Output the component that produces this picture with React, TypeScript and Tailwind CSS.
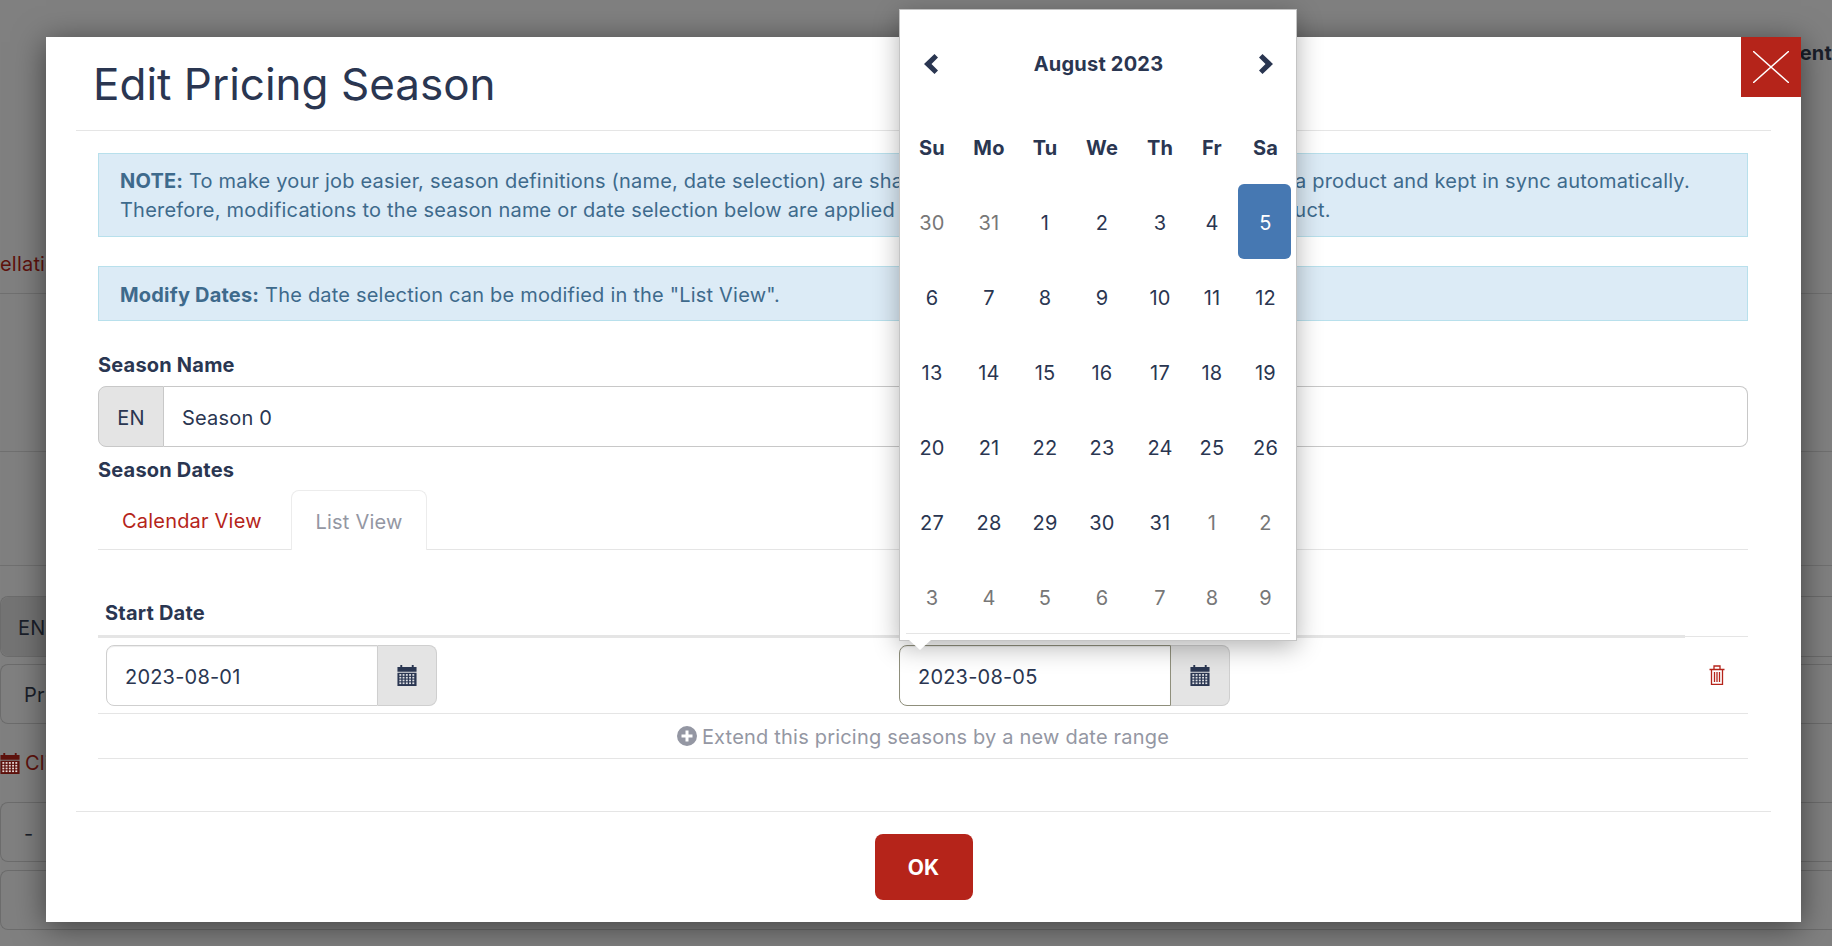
const font = '[font-family:Inter,"Noto_Sans",sans-serif]'

const weeks = [
  ['30', '31', '1', '2', '3', '4', '5'],
  ['6', '7', '8', '9', '10', '11', '12'],
  ['13', '14', '15', '16', '17', '18', '19'],
  ['20', '21', '22', '23', '24', '25', '26'],
  ['27', '28', '29', '30', '31', '1', '2'],
  ['3', '4', '5', '6', '7', '8', '9'],
]
const days = ['Su', 'Mo', 'Tu', 'We', 'Th', 'Fr', 'Sa']

function CalendarIcon({ className }: { className: string }) {
  const holes = []
  for (let r = 0; r < 4; r++) {
    for (let c = 0; c < 5; c++) {
      holes.push(<rect key={`${r}-${c}`} x={2 + c * 3.4} y={9.500 + r * 2.900} width="2" height="1.800" fill="white" opacity="0.85" />)
    }
  }
  return (
    <svg viewBox="0 0 20 22" className={className} fill="currentColor">
      <path d="M3 0h2v2h10V0h2v2h3v5H0V2h3V0zM0 8h20v14H0V8z" />
      {holes}
    </svg>
  )
}

function DateInput({ value, active }: { value: string; active?: boolean }) {
  return (
    <div className="flex h-[61px] w-[331px] text-[#2a3651]">
      <div className={`flex flex-1 items-center rounded-l-lg border bg-white pt-[2px] pl-[18px] shadow-[inset_0_1px_1px_rgba(0,0,0,0.075)] ${active ? 'border-[#8f8f7c]' : 'border-[#cfcfcf]'}`}>
        {value}
      </div>
      <div className="flex w-[59px] items-center justify-center rounded-r-lg border border-l-0 border-[#cfcfcf] bg-[#e4e4e4]">
        <CalendarIcon className="h-[21px] w-[20px]" />
      </div>
    </div>
  )
}

export default function App() {
  return (
    <div className={`${font} relative h-[946px] overflow-hidden bg-[#808080] text-[20px] tracking-[0.2px]`}>
      {/* page behind the dialog */}
      <div className="flex h-full flex-col text-[#1a1f2a]">
        <div className="flex h-[294px] flex-col border-b border-[#707070]">
          <div className="mt-[38px] self-end font-bold">ent</div>
          <div className="mt-auto mb-[14px] text-[#5e120d]">ellation</div>
        </div>
        <div className="h-[158px] border-b border-[#707070]" />
        <div className="h-[114px] border-b border-[#707070]" />
        <div className="mt-[30px] flex h-[61px] shrink-0 rounded-l-lg border border-r-0 border-[#6c6c6c]">
          <div className="flex w-[66px] items-center rounded-l-lg bg-[#747474] pt-[2px] pl-[17px]">EN</div>
        </div>
        <div className="mt-[7px] flex h-[60px] shrink-0 items-center rounded-l-lg border border-r-0 border-[#6c6c6c] pt-[2px] pl-[23px]">Price</div>
        <div className="mt-[27px] flex h-[24px] items-center gap-[5px] text-[#5e120d]">
          <CalendarIcon className="h-[21px] w-[20px]" />
          Click
        </div>
        <div className="mt-[27px] flex h-[60px] shrink-0 items-center rounded-l-lg border border-r-0 border-[#6c6c6c] pt-[4px] pl-[23px]">-</div>
        <div className="mt-[8px] h-[60px] shrink-0 rounded-l-lg border border-r-0 border-[#6c6c6c]" />
      </div>

      {/* dialog */}
      <div className="absolute top-[37px] left-[46px] flex h-[885px] w-[1755px] flex-col bg-white px-[30px] text-[#2a3651] shadow-[0_5px_30px_rgba(0,0,0,0.5)]">
        <div className="flex h-[94px] shrink-0 items-center border-b border-[#e5e5e5] pt-[1px] pl-[17px] text-[44px] tracking-normal">
          Edit Pricing Season
        </div>
        <div className="flex flex-1 flex-col pr-[23px] pl-[22px]">
          <div className="mt-[22px] h-[84px] border border-[#b8e0ec] bg-[#dcebf6] px-[21px] pt-[13px] leading-[29px] whitespace-nowrap text-[#3e6a8c]">
            <b className="font-bold">NOTE:</b> To make your job easier, season definitions (name, date selection) are shared between all your pricing rules within a product and kept in sync automatically.
            <br />
            Therefore, modifications to the season name or date selection below are applied to all those pricing rules within your product.
          </div>
          <div className="mt-[29px] flex h-[55px] items-center border border-[#b8e0ec] bg-[#dcebf6] px-[21px] pt-[2px] text-[#3e6a8c]">
            <span><b className="font-bold">Modify Dates:</b> The date selection can be modified in the "List View".</span>
          </div>
          <div className="mt-[30px] h-[26px] pt-[1px] leading-[26px] font-bold">Season Name</div>
          <div className="mt-[9px] flex h-[61px] shrink-0">
            <div className="flex w-[66px] items-center justify-center rounded-l-lg border border-[#c8c8c8] bg-[#e4e4e4] pt-[2px]">EN</div>
            <div className="flex flex-1 items-center rounded-r-lg border border-l-0 border-[#c8c8c8] pt-[2px] pl-[18px]">Season 0</div>
          </div>
          <div className="mt-[9px] h-[26px] pt-[1px] leading-[26px] font-bold">Season Dates</div>
          <div className="mt-[8px] flex h-[60px] shrink-0 border-b border-[#e5e5e5] pl-[7px]">
            <div className="flex w-[186px] items-center pt-[3px] pl-[17px] text-[#b5241a]">Calendar View</div>
            <div className="-mb-px flex w-[136px] items-center justify-center rounded-t-lg border border-b-0 border-[#ececec] bg-white pt-[3px] text-[#9497a3]">List View</div>
          </div>
          <div className="mt-[50px] flex h-[24px] items-center pt-[1px] pl-[7px] font-bold">Start Date</div>
          <div className="mt-[11px] flex shrink-0">
            <div className="h-[3px] w-[1587px] bg-[#e5e5e5]" />
            <div className="mt-px h-px flex-1 bg-[#e5e5e5]" />
          </div>
          <div className="flex h-[76px] shrink-0 items-center border-b border-[#e5e5e5] pl-[8px]">
            <DateInput value="2023-08-01" />
            <div className="ml-[462px]">
              <DateInput value="2023-08-05" active />
            </div>
            <svg viewBox="0 0 16 20" className="mb-[2px] ml-auto mr-[23px] h-[20px] w-[16px] text-[#b5241a]" fill="none" stroke="currentColor" strokeWidth="1.300">
              <path d="M0.500 4.500h15M5 4V1h6v3M2.500 4.500v14.800h11V4.500M5.500 7v10M8 7v10M10.500 7v10" />
            </svg>
          </div>
          <div className="flex h-[45px] shrink-0 items-center justify-center gap-[5px] border-b border-[#e5e5e5] text-[#9497a3]">
            <svg viewBox="0 0 20 20" className="h-[20px] w-[20px]" fill="currentColor">
              <path fillRule="evenodd" d="M10 0a10 10 0 1 1 0 20 10 10 0 0 1 0-20zM8.500 4.500v4h-4v3h4v4h3v-4h4v-3h-4v-4h-3z" />
            </svg>
            <span className="pt-[2px]">Extend this pricing seasons by a new date range</span>
          </div>
        </div>
        <div className="flex h-[111px] shrink-0 items-start justify-center border-t border-[#e5e5e5] pt-[22px]">
          <div className="flex h-[66px] w-[98px] items-center justify-center rounded-lg bg-[#b5241a] pt-[1px] text-[21px] font-bold text-white">OK</div>
        </div>
        <div className="absolute top-0 right-0 flex h-[60px] w-[60px] items-center justify-center bg-[#b5241a]">
          <svg viewBox="0 0 36 32" className="h-[32px] w-[36px]" stroke="white" strokeWidth="1.400">
            <path d="M0 0l36 32M36 0L0 32" />
          </svg>
        </div>
      </div>

      {/* date picker popup */}
      <div className="absolute top-[9px] left-[899px] h-[632px] w-[398px] border border-[#c4c4c4] bg-white px-[6px] text-[#2a3651] shadow-[0_6px_24px_rgba(0,0,0,0.3)]">
        <div className="flex h-[108px] items-center justify-between pr-[17px] pl-[18px]">
          <svg viewBox="0 0 14 20" className="h-[20px] w-[14px]" fill="currentColor"><path d="M10.500 0L14 3.500 7.500 10l6.500 6.500-3.500 3.500L0 10z" /></svg>
          <span className="font-bold">August 2023</span>
          <svg viewBox="0 0 14 20" className="h-[20px] w-[14px]" fill="currentColor"><path d="M3.500 0L0 3.500 6.500 10 0 16.500 3.500 20 14 10z" /></svg>
        </div>
        <div className="grid grid-cols-[50px_64px_48px_66px_50px_54px_53px]">
          {days.map((d) => (
            <div key={d} className="flex h-[66px] items-start justify-center pt-[15px] pl-[2px] font-bold">{d}</div>
          ))}
          {weeks.flatMap((week, w) =>
            week.map((d, i) => {
              const muted = (w === 0 && i < 2) || (w === 4 && i > 4) || w === 5
              const selected = w === 0 && i === 6
              return (
                <div
                  key={`${w}-${i}`}
                  className={`flex h-[75px] items-center justify-center rounded-md pt-[2px] pl-[2px] ${selected ? 'bg-[#4678b2] text-white' : muted ? 'text-[#777777]' : ''}`}
                >
                  {d}
                </div>
              )
            }),
          )}
        </div>
        <div className="mt-[-1px] h-px bg-[#e5e5e5]" />
        <div className="absolute top-full left-[9px] h-0 w-0 border-x-[11px] border-t-[10px] border-x-transparent border-t-white" />
      </div>
    </div>
  )
}
